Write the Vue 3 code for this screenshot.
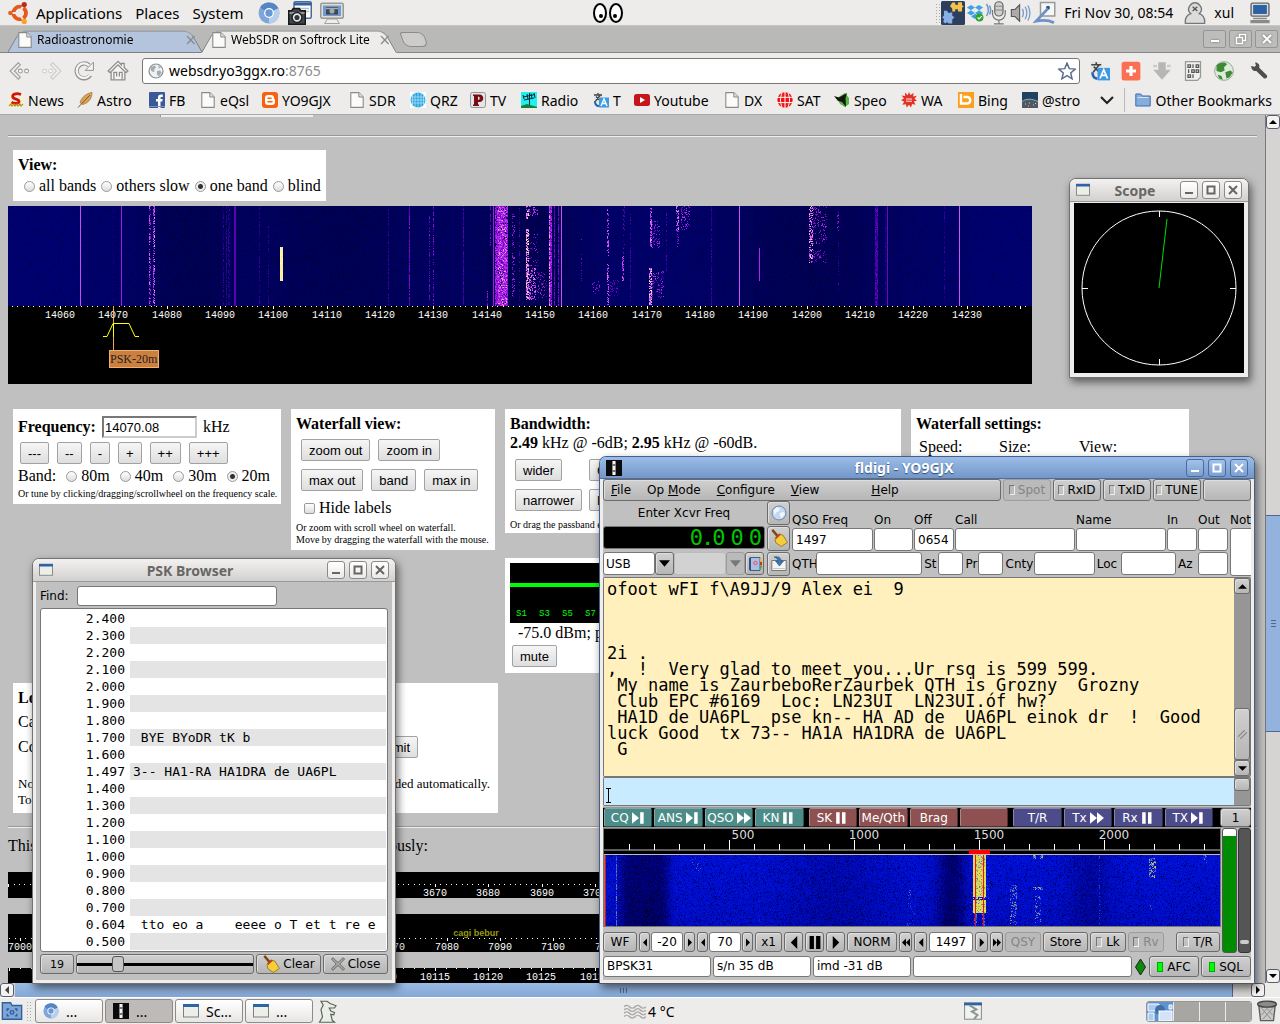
<script setup>
import { onMounted, ref } from 'vue'

/* ---------- icon artwork (16 x 16 grid) ---------- */
const art = {
  ubuntu: '<circle cx="8.500" cy="8" r="4.600" fill="none" stroke="#e8571c" stroke-width="2.800"/><path d="M8 8L1 8M8 8L12 1.500M8 8L12 14.500" stroke="#edeceb" stroke-width="1.500"/><circle cx="1.800" cy="8" r="1.700" fill="#e0641f"/><circle cx="11.800" cy="1.900" r="1.900" fill="#c02a1c"/><circle cx="11.800" cy="14.100" r="1.900" fill="#f2a71e"/>',
  chromium: '<circle cx="8" cy="8" r="7.600" fill="#7ea6d8"/><path d="M8 8L1.500 4A7.600 7.600 0 0 1 14.800 4.600Z" fill="#5585c2"/><path d="M8 8L14.800 4.600A7.600 7.600 0 0 1 8 15.600Z" fill="#b7cfec"/><circle cx="8" cy="8" r="3.600" fill="#fff"/><circle cx="8" cy="8" r="2.700" fill="#6a98d4"/>',
  camera: '<rect x="4" y=".5" width="11.500" height="11" rx="1" fill="#fff" stroke="#4a6a9c"/><path d="M4 2h11.500" stroke="#35609e" stroke-width="2"/><path d="M6 5h8M6 7h8" stroke="#b8c0cc"/><path d="M.5 6.500h2l1-1.500h4l1 1.500h3v9h-11z" fill="#44474a" stroke="#16181a"/><path d="M1 8h10" stroke="#a9acae"/><circle cx="6" cy="11" r="3.300" fill="#e4e6e8" stroke="#222"/><circle cx="6" cy="11" r="1.700" fill="#33373c"/>',
  display: '<rect x=".5" y="1.500" width="15" height="10" rx="1" fill="#dcdcd8" stroke="#9a9a96"/><rect x="2" y="3" width="12" height="7" fill="#6f9bd0"/><rect x="4" y="4" width="8" height="5" fill="#44474a"/><path d="M4 5h8" stroke="#a9acae"/><circle cx="8" cy="6.700" r="1.700" fill="#9ab"/><path d="M5 12h6l2 3H3z" fill="#eee" stroke="#999" stroke-width=".6"/>',
  doc: '<path d="M1.800.6h8l4.400 4.400v10.400H1.800z" fill="#fbfbfa" stroke="#8a8a88" stroke-width="1.100"/><path d="M9.800.6v4.400h4.400" fill="#ddd" stroke="#8a8a88"/>',
  back: '<path d="M7.500 2L1.500 8l6 6 1.500-1.500L4.700 8 9 3.500z" fill="#eceae8" stroke="#a09e9c" stroke-width=".8"/><circle cx="9" cy="8" r="1.400" fill="#fff" stroke="#999" stroke-width=".8"/><circle cx="13.500" cy="8" r="1.400" fill="#fff" stroke="#999" stroke-width=".8"/>',
  fwd: '<path d="M8.500 2l6 6-6 6L7 12.500 11.300 8 7 3.500z" fill="#f1efee" stroke="#cdcbc9" stroke-width=".8"/><circle cx="2.500" cy="8" r="1.300" fill="#fff" stroke="#ccc" stroke-width=".8"/><circle cx="7" cy="8" r="1.300" fill="#fff" stroke="#ccc" stroke-width=".8"/>',
  reload: '<path d="M13 11.500A6 6 0 1 1 12 3.400" fill="none" stroke="#929090" stroke-width="3.400"/><path d="M9 7.500h6.500V1z" fill="#f6f5f4" stroke="#929090" stroke-width=".8"/><path d="M12.800 11A5.800 5.800 0 1 1 12 3.600" fill="none" stroke="#f6f5f4" stroke-width="1.800"/>',
  home: '<path d="M8 1L.8 8l1.200 1 1-.8V14.500h10V8.200l1 .8 1.200-1-2.700-2.600V2.500h-2v1.100z" fill="#f5f4f3" stroke="#8d8b89" stroke-width=".9"/><path d="M3.500 8L8 3.500 12.500 8M5 14V9h2v3M9 12V9h2v5" fill="none" stroke="#8d8b89" stroke-width=".9"/>',
  globe: '<circle cx="8" cy="8" r="7" fill="#eef1f2" stroke="#8b9092" stroke-width="1.200"/><path d="M3 4l4-1.500 1 2-2 2 .5 2L5 9 2.500 7zM9 8l3-.5 1.500 2-2.500 4-2-2zM10 2.500l3 2-2 1z" fill="#a5abae"/>',
  news: '<rect width="16" height="16" fill="#f5efd8"/><path d="M13 2.500C8 .5 3.500 2.500 5 5.500c1 2 6 1.500 6 4 0 2.500-5 2-7.500.8" fill="none" stroke="#d0140e" stroke-width="2.800"/><path d="M1 14l2-2 1 2 2-2 1 2 2-2 1 2 2-2 1 2 2-2" stroke="#b5921a" fill="none" stroke-width="1.200"/>',
  feather: '<path d="M15 .5C11 1 5 4 3 10.500l2.500 2C12 11 15 6 15 .5z" fill="#d9a45c" stroke="#9a6a2c" stroke-width=".7"/><path d="M13 3L1 15.500" stroke="#7c5424"/>',
  fb: '<rect width="16" height="16" rx="1" fill="#3b5998"/><path d="M9 16V9.500H7V7h2V5.500C9 3.500 10 2.500 12 2.500h1.800V5h-1.300c-.7 0-1 .3-1 1v1h2.200l-.4 2.500h-1.800V16z" fill="#fff"/><path d="M0 14.500h16" stroke="#7c90bd"/>',
  blogger: '<rect width="16" height="16" rx="3" fill="#f7620e"/><path d="M6 3h3a3 3 0 0 1 3 3c0 1 1 .8 1 1.800V10a3 3 0 0 1-3 3H6a3 3 0 0 1-3-3V6a3 3 0 0 1 3-3z" fill="#fff"/><path d="M6 6.300h3M6 9.800h4" stroke="#f7620e" stroke-width="1.500" stroke-linecap="round"/>',
  qrz: '<rect width="16" height="16" fill="#fff"/><circle cx="8" cy="8" r="7.500" fill="#25a5de"/><path d="M0 5h16M0 8h16M0 11h16M5 0v16M8 0v16M11 0v16M2.500 2v12M13.500 2v12" stroke="#bfe6f7" stroke-width=".7"/>',
  tv: '<rect x=".5" y=".5" width="15" height="15" rx="2" fill="#e3e6e5" stroke="#8b9a98"/><path d="M3 2.500h6.500c5 0 5 7.500 0 7.500H8v2.500h1V14H3v-1.500h1V4H3zM8 4.500v3.500c2.300 0 2.300-3.500 0-3.500z" fill="#7a0c12" fill-rule="evenodd"/>',
  radio: '<rect width="16" height="16" fill="#1af2f2"/><path d="M8.500 1v15M2 5l12-2.500M3 8l10-2M2 3l1 4M6 2l1 5M10 1.500l1 5M13 1l1 5" stroke="#123" stroke-width="1"/><path d="M0 14l6-2 10 3v1H0z" fill="#197d3a"/>',
  translate: '<rect x=".5" y=".5" width="9" height="10" fill="#e4e6e2"/><path d="M1 3h8M5 1v2M2.500 9L7.500 3M3 4.500l5 5" stroke="#444" stroke-width="1.300"/><path d="M1 9c0 4 2 6 5 6v-2c-2 0-3-1.500-3-4z" fill="#2a62ae"/><rect x="6" y="5.500" width="10" height="10" fill="#3b9ae2"/><path d="M8 14l3-7 3 7M9 11.500h4" fill="none" stroke="#fff" stroke-width="1.400"/>',
  youtube: '<rect y="2" width="16" height="12" rx="2.500" fill="#c4161c"/><path d="M6 5v6l5-3z" fill="#fff"/>',
  sat: '<circle cx="8" cy="8" r="7.700" fill="#f01414"/><path d="M0 5.300h16M0 10.600h16M8 0v16M5 1c-2 5-2 9 0 14M11 1c2 5 2 9 0 14" stroke="#fff" stroke-width="1" fill="none"/>',
  speo: '<path d="M3 6l8-5 4 5v6l-4 3-5-3z" fill="#57b445"/><path d="M0 4l5 1.500L13 1l-1.500 5L12 15 8 10 4 9z" fill="#14180f"/>',
  wa: '<path d="M8 0l1.500 3.200L12.500.8l-.3 3.700 3.600-.7-2.300 3 2.500 1.700-3.100 1 1.600 3.200-3.400-.7L10 15.500 8 12.800 5.700 15.500l-.8-3.300-3.600.6 1.900-3L0 8l3-1.400L.6 3.500l3.600.5L4 .6l2.700 2.600z" fill="#e33223"/><path d="M5 7h6M5 9.200h6" stroke="#fff" stroke-width=".9"/>',
  bing: '<rect width="16" height="16" fill="#fba01c"/><path d="M3 2v9.500h6.500a3.300 3.300 0 0 0 0-6.500H5.500" fill="none" stroke="#fff" stroke-width="2.400"/>',
  astro: '<rect width="16" height="16" fill="#24405f"/><path d="M0 10c4-3 10-3 16 0v6H0z" fill="#4d5a64"/><path d="M0 9.500c4-3 10-3 16 0" stroke="#8fb6d4" fill="none"/><path d="M3 12h1M7 11h1M11 13h1M13 11.500h1M6 14h1" stroke="#e0c893"/>',
  folder: '<path d="M.8 14V2h5l1.500 2h7.900v10z" fill="#86aedd" stroke="#3d6bab"/><path d="M2.500 5.500h11" stroke="#d3e3f6"/>',
  star: '<path d="M8 1l2 4.900 5.300.4-4 3.400 1.200 5.200L8 12.100l-4.500 2.800 1.200-5.200-4-3.400L6 5.900z" fill="#fff" stroke="#5a6c8c" stroke-width="1.300"/>',
  plus: '<rect x=".5" y=".5" width="15" height="15" rx="2" fill="#fb6f52"/><path d="M8 4v8M4 8h8" stroke="#fff" stroke-width="2.500"/>',
  down: '<path d="M5 1h6v6h4l-7 8-7-8h4z" fill="#b7b6b4"/><path d="M1 4h3M12 4h3" stroke="#cbcac8" stroke-width="2"/>',
  binary: '<path d="M2 .5h12V13l-2.500 2.500H2z" fill="#f0f0ee" stroke="#999"/><path d="M4 3h2v2H4zM8 2.500v3M10.500 3h2v2h-2zM4.500 6.500v3M7 7h2v2H7zM10.500 7h2v2h-2zM4 11h2v2H4zM8 10.500v3" fill="none" stroke="#555"/>',
  earth: '<circle cx="8" cy="8" r="7.500" fill="#dfeadd" stroke="#7e9a7a" stroke-width=".6"/><path d="M2 3.500C5 .5 9 .8 10.500 2.500L8 5l.5 2.500-3 1.500L2 8zM9 9l4-1.500 2 1.500-2.500 4-2.500 1zM3 11l3 1 1 3-3-1.200z" fill="#3f8b34"/>',
  wrench: '<path d="M1 3.500l3 .8 1.300-1.300L4.500.5C7 .3 9 2.500 8.200 5.200l6.800 6.500c1 1.500-1 3.800-2.700 2.800L5.600 8C3 8.600 1 6.200 1 3.500z" fill="#4e4e4d"/>',
  puzzle: '<rect width="16" height="16" rx="1" fill="#2c3f5d"/><path d="M7.500 1h2v1.500h1.800V.8H14v2l1.200.7-1.200 1V7h-2.700V5.500H9.500V7h-2V5L6 3.500z" fill="#f3c24a"/><path d="M2 6.500h2l1 1.500L7.500 7.500v2.300l1.500 1-1.500 1.500V15H5l-1-1-1 1-1.500-1 .5-2L.8 11 2 9.500z" fill="#88b0e8"/>',
  dropbox: '<path d="M8 3L4.500.8.8 3.200 4.300 5.500zM8 3l3.500-2.200 3.700 2.400-3.500 2.300zM8 8l3.700-2.500 3.500 2.400-3.700 2.300zM8 8L4.300 5.500.8 7.900l3.700 2.300zM4.500 11L8 8.700l3.500 2.300L8 13.300z" fill="#3fa3e0"/><circle cx="12" cy="12" r="3.500" fill="#2fa52e"/><path d="M10.300 12l1.300 1.300L14 10.800" fill="none" stroke="#fff"/>',
  mic: '<path d="M1 2q2.500 4 0 8M3 3q1.500 3 0 6" fill="none" stroke="#7397c8"/><rect x="6.500" y=".5" width="5.500" height="9.500" rx="2.700" fill="#cfcfcd" stroke="#666" stroke-width=".8"/><path d="M6.500 3.500H12M6.500 6H12" stroke="#888" stroke-width=".8"/><path d="M5 6v2.500a4.200 4.200 0 0 0 8.500 0V6M9.300 12.500v2.500M6 15.300h6.500" fill="none" stroke="#777" stroke-width=".8"/>',
  speaker: '<path d="M1 5.500h2.500L7 2v12L3.500 10.500H1z" fill="#aaa" stroke="#555" stroke-width=".8"/><path d="M9 5q1.500 3 0 6M11 3.500q2.500 4.500 0 9M13 2.500q3 5.500 0 11" fill="none" stroke="#7397c8" stroke-width=".9"/>',
  ink: '<rect x="5" y="1" width="9.500" height="9" fill="#f6f6f6" stroke="#999"/><circle cx="10" cy="4.500" r="1.300" fill="#2e5285"/><path d="M10 5L2 13.500q7-1.500 12 1" fill="none" stroke="#6e92c8" stroke-width="1.800"/>',
  user: '<path d="M1 15.500c-.5-5 2.500-6.500 4-7-4-3 0-8 3-8s7 5 3 8c1.500.5 4.500 2 4 7z" fill="#dcdcda" stroke="#777"/><path d="M6.300 3.500l3.400 3M9.700 3.500l-3.400 3" stroke="#555"/>',
  pc: '<rect x="1.500" y=".8" width="13" height="9.500" rx="1" fill="#d8dad8" stroke="#666"/><rect x="3" y="2.200" width="10" height="6.500" fill="#2c62a3"/><path d="M3 11.500h10v1H3zM1 13h14v2.500H1z" fill="#8a8c8a"/>',
  rig: '<rect width="16" height="16" fill="#0b0b0b"/><path d="M8 1v14" stroke="#777" stroke-width="4"/><path d="M8 1v3M8 6v4M8 12v3" stroke="#f4f4f4" stroke-width="2.400"/>',
  win: '<rect x=".5" y="1.500" width="15" height="12.500" fill="#eceee8" stroke="#7c7f80"/><path d="M0 2.500h16" stroke="#2e63a5" stroke-width="3"/>',
  broom: '<path d="M2 .8l5 5.700" stroke="#7d4a12" stroke-width="2.200"/><path d="M4.500 8.500l4-4 3 1 4 6.500-5.500 3.500-5-3.500z" fill="#f2cf3b" stroke="#9a741c" stroke-width=".8"/><path d="M5 8.200l4-3.700" stroke="#c43a1c" stroke-width="1.600"/>',
  cross: '<path d="M2 .8l6 5.500 6-5.500 1.500 1.500L10 8l5.500 5.500L14 15.200 8 9.700l-6 5.500L.5 13.500 6 8 .5 2.300z" fill="#aaa9a7" stroke="#5e5e5c"/>',
  world: '<circle cx="8" cy="8" r="7" fill="#c3d9f0" stroke="#6886ad"/><path d="M2.500 5l3.500-3 3 1.500L8 6 5 7.500l-1 3zM9 8l4-1 1 2-3 4-2-1.500z" fill="#f2f6fa"/>',
  book: '<path d="M3 1.500h10v13H3z" fill="#a9bfe0" stroke="#3d5f96"/><path d="M3 2v12" stroke="#2f4f86" stroke-width="2"/><rect x="5.500" y="4" width="6" height="6" fill="#c9b2d4"/><circle cx="8.500" cy="7" r="1.700" fill="none" stroke="#a86a98"/><path d="M14 2.500v3" stroke="#f0c020" stroke-width="2"/><path d="M14 6v3" stroke="#d03020" stroke-width="2"/><path d="M14 9.500v3" stroke="#50b030" stroke-width="2"/>',
  save: '<path d="M.8 4.500h14.400v10H.8z" fill="#f4f4f3" stroke="#777"/><path d="M2.500 12.500h11" stroke="#999" stroke-dasharray="1 1"/><path d="M3 1c5-1 7 1 7 4h2.500L8.500 10l-4-5H7c0-2-1.500-3-4-4z" fill="#3f76b5" stroke="#24507f" stroke-width=".6"/>',
  desk: '<path d="M1 14V2h6l1 2h7v10z" fill="#7fa6d6" stroke="#2f5f9c"/><path d="M4.500 8V6.500H6M10 6.500h1.500V8M11.500 10v1.500H10M6 11.500H4.500V10" fill="none" stroke="#2f5f9c"/><circle cx="8" cy="9" r="1.300" fill="none" stroke="#2f5f9c"/>',
  gnome: '<path d="M4 1.500h4l2 1.500 4 1.500-1 1.500H9.500l1 2 2.500 1-.5 1.500-2-.3 1 4 1.500 1.300H3L5 12 4 7 5.500 4z" fill="#ecefe6" stroke="#596653" stroke-width=".8"/>',
  crack: '<rect x=".5" y=".8" width="15" height="14.500" fill="#f1f3ee" stroke="#8c9692"/><path d="M0 1.800h16" stroke="#2f62a6" stroke-width="2.400"/><path d="M5 3l6 3.500-4 2 5 3-3 3.500" fill="none" stroke="#8c9692" stroke-width="1.800"/>',
  trash: '<path d="M2 3.500l1.300 11.500h9.400L14 3.500z" fill="#c8c9c7" stroke="#5d5f5d"/><ellipse cx="8" cy="3" rx="6.800" ry="2.200" fill="#8a8c8a" stroke="#444"/><path d="M4 6l7 8M8 6l4 5M12 6l-7 8M8 6l-4 5" stroke="#8b8d8b" stroke-width=".7"/>',
  fog: '<path d="M0 3q2-3 4 0t4 0 4 0 4 0M0 6.500q2-3 4 0t4 0 4 0 4 0M0 10q2-3 4 0t4 0 4 0 4 0M0 13.500q2-3 4 0t4 0 4 0 4 0" fill="none" stroke="#a9a9a7" stroke-width="1.300"/>',
  chevron: '<path d="M2 5l6 6 6-6" fill="none" stroke="#222" stroke-width="2.200"/>'
}

const bookmarks = [
  ['News', 'news', 69], ['Astro', 'feather', 72], ['FB', 'fb', 51], ['eQsl', 'doc', 62],
  ['YO9GJX', 'blogger', 87], ['SDR', 'doc', 61], ['QRZ', 'qrz', 60], ['TV', 'tv', 51],
  ['Radio', 'radio', 72], ['T', 'translate', 41], ['Youtube', 'youtube', 90], ['DX', 'doc', 53],
  ['SAT', 'sat', 57], ['Speo', 'speo', 67], ['WA', 'wa', 57], ['Bing', 'bing', 64], ['@stro', 'astro', 77]
]

const extensions = ['translate', 'plus', 'down', 'binary', 'earth']

const views = ['all bands', 'others slow', 'one band', 'blind']
const view = ref('one band')
const bands = ['80m', '40m', '30m', '20m']
const band = ref('20m')
const frequency = ref('14070.08')

/* ---------- frequency scales ---------- */
function makeScale(first, last, zeroAt, origin, pxPerKhz, step) {
  const out = []
  for (let k = first; k <= last; k++) {
    const x = Math.round(zeroAt + (k - origin) * pxPerKhz)
    const major = k % step === 0
    out.push({ k, x, major, label: major && x > 11 && x < 1005 })
  }
  return out
}
const mainScale = makeScale(14051, 14241, 52, 14060, 5.333, 10)
const scale80 = makeScale(3590, 3781, 427, 3670, 5.333, 10)
const scale40 = makeScale(6998, 7189, 12, 7000, 5.333, 10)
const scale30 = makeScale(10075, 10171, 427, 10115, 10.64, 5)

/* ---------- PSK browser ---------- */
const channels = [
  ['2.400', ''], ['2.300', ''], ['2.200', ''], ['2.100', ''], ['2.000', ''], ['1.900', ''], ['1.800', ''],
  ['1.700', ' BYE BYoDR tK b'], ['1.600', ''], ['1.497', '3-- HA1-RA HA1DRA de UA6PL'], ['1.400', ''],
  ['1.300', ''], ['1.200', ''], ['1.100', ''], ['1.000', ''], ['0.900', ''], ['0.800', ''], ['0.700', ''],
  ['0.604', ' tto eo a    eeee o T et t re e'], ['0.500', '']
]
const level = ref(19)

/* ---------- fldigi ---------- */
const received = [
  'ofoot wFI f\\A9JJ/9 Alex ei  9', '', '', '', '2i .',
  ',  !  Very glad to meet you...Ur rsq is 599 599.',
  ' My name is ZaurbeboRerZaurbek QTH is Grozny  Grozny',
  ' Club EPC #6169  Loc: LN23UI  LN23UI.óf hw?',
  ' HA1D de UA6PL  pse kn-- HA AD de  UA6PL einok dr  !  Good',
  'luck Good  tx 73-- HA1A HA1DRA de UA6PL', ' G'
].join('\n')
const toggles = [['Spot', true], ['RxID', false], ['TxID', false], ['TUNE', false]]
const logTop = [
  ['QSO Freq', '1497', 82], ['On', '', 40], ['Off', '0654', 41], ['Call', '', 121],
  ['Name', '', 91], ['In', '', 31], ['Out', '', 31]
]
const logBottom = [['QTH', 24, 106], ['St', 14, 25], ['Pr', 13, 25], ['Cnty', 28, 61], ['Loc', 24, 55], ['Az', 20, 30]]
const glyph = { skip: 'M0 0l6 5-6 5zM7 0h3v10H7z', fast: 'M0 0l6 5-6 5zM6 0l6 5-6 5z', pause: 'M1 0h3v10H1zM6 0h3v10H6z' }
const macros = [
  { tone: 'teal', items: [['CQ', 'skip'], ['ANS', 'skip'], ['QSO', 'fast'], ['KN', 'pause']] },
  { tone: 'wine', items: [['SK', 'pause'], ['Me/Qth'], ['Brag'], ['']] },
  { tone: 'indigo', items: [['T/R'], ['Tx', 'fast'], ['Rx', 'pause'], ['TX', 'skip']] }
]
const wfTicks = Array.from({ length: 24 }, (_, i) => ({ x: 25 + i * 25, hz: (i + 1) * 100 }))

/* ---------- waterfalls ---------- */
function rng(seed) {
  let s = seed
  return () => {
    s = (s * 1664525 + 1013904223) >>> 0
    return s / 4294967296
  }
}
function ramp(stops, v) {
  const t = Math.max(0, Math.min(0.999, v)) * (stops.length - 1)
  const i = Math.floor(t)
  const f = t - i
  return [0, 1, 2].map(c => stops[i][c] + (stops[i + 1][c] - stops[i][c]) * f)
}
function paint(canvas, stops, base, signals, seed) {
  const { width: w, height: h } = canvas
  const rand = rng(seed)
  const lv = new Float32Array(w * h)
  for (let y = 0; y < h; y++) for (let x = 0; x < w; x++) lv[y * w + x] = base(x, y, rand)
  for (const [sx, sw, y0, y1, strength, density] of signals) {
    for (let y = y0; y < Math.min(y1, h); y++) {
      for (let x = sx; x < sx + sw; x++) {
        if (rand() < density) lv[y * w + x] = strength * (density < 1 ? 0.6 + rand() * 0.4 : 0.95 + rand() * 0.05)
      }
    }
  }
  const ctx = canvas.getContext('2d')
  const img = ctx.createImageData(w, h)
  lv.forEach((v, i) => {
    const c = ramp(stops, v)
    img.data.set([c[0], c[1], c[2], 255], i * 4)
  })
  ctx.putImageData(img, 0, 0)
}

const bandCanvas = ref(null)
const audioCanvas = ref(null)
onMounted(() => {
  paint(
    bandCanvas.value,
    [[0, 0, 40], [0, 0, 116], [110, 0, 190], [185, 40, 240], [225, 130, 240], [255, 255, 150]],
    (x, y, r) => {
      const dip = 0.06 * (Math.exp(-(((x - 180) / 50) ** 2)) + Math.exp(-(((x - 330) / 90) ** 2)) + Math.exp(-(((x - 520) / 60) ** 2)) + Math.exp(-(((x - 800) / 90) ** 2)))
      return (x < 70 || x > 960 ? 0.19 : 0.18) - dip - (r() < 0.22 ? r() * 0.1 : 0)
    },
    [
      [72, 1, 0, 100, 0.7, 1], [105, 1, 0, 100, 0.28, 0.4], [113, 1, 0, 100, 0.55, 1], [141, 1, 0, 100, 0.8, 0.6],
      [142, 1, 0, 100, 0.6, 0.4], [145, 1, 0, 100, 0.75, 0.6], [146, 1, 0, 100, 0.9, 0.5], [215, 1, 0, 100, 0.34, 0.7],
      [218, 1, 0, 100, 0.34, 0.8], [220, 2, 0, 100, 0.36, 0.5], [226, 2, 0, 100, 0.38, 1], [251, 1, 0, 100, 0.34, 0.6],
      [260, 1, 20, 100, 0.34, 0.6], [272, 3, 41, 75, 1, 1], [380, 1, 0, 100, 0.36, 0.6], [401, 1, 0, 100, 0.5, 0.9],
      [421, 1, 10, 95, 0.5, 0.6], [425, 1, 0, 100, 0.5, 0.6], [455, 1, 0, 100, 0.4, 0.9], [482, 1, 0, 40, 0.5, 0.6],
      [479, 1, 85, 100, 0.6, 0.8], [485, 1, 0, 100, 0.55, 1], [487, 13, 0, 100, 0.64, 0.92], [490, 9, 0, 100, 0.88, 0.35],
      [504, 3, 5, 95, 0.6, 0.25], [511, 1, 0, 100, 0.4, 0.4], [518, 3, 0, 13, 1, 0.7], [518, 3, 23, 94, 1, 0.7],
      [521, 9, 0, 10, 0.7, 0.3], [521, 9, 28, 60, 0.6, 0.15], [521, 7, 62, 94, 0.85, 0.4], [528, 11, 66, 92, 0.6, 0.25],
      [541, 1, 0, 100, 0.9, 0.9], [542, 2, 0, 100, 0.65, 0.9], [546, 1, 0, 100, 0.5, 0.9], [550, 1, 0, 100, 0.5, 0.9],
      [553, 1, 0, 100, 0.7, 1], [573, 1, 30, 75, 0.5, 0.25], [584, 8, 74, 88, 0.6, 0.2], [599, 2, 3, 50, 0.75, 0.4],
      [599, 2, 58, 99, 0.85, 0.6], [601, 10, 74, 90, 0.45, 0.2], [615, 2, 0, 55, 0.45, 0.2], [614, 2, 50, 75, 0.75, 0.6],
      [622, 1, 8, 95, 0.4, 0.6], [642, 2, 0, 43, 0.85, 0.6], [644, 8, 15, 42, 0.6, 0.2], [641, 3, 62, 99, 1, 0.7],
      [644, 12, 65, 92, 0.65, 0.25], [658, 1, 0, 65, 0.4, 0.4], [668, 3, 0, 25, 0.9, 0.5], [669, 2, 25, 42, 0.6, 0.3],
      [673, 9, 0, 24, 0.65, 0.25], [703, 1, 0, 100, 0.36, 0.8], [731, 1, 0, 100, 0.72, 1], [751, 1, 42, 75, 0.6, 1],
      [801, 4, 0, 57, 0.95, 0.55], [805, 14, 0, 38, 0.6, 0.2], [805, 14, 44, 57, 0.55, 0.2], [829, 2, 6, 25, 0.6, 0.4],
      [830, 1, 35, 90, 0.4, 0.3], [867, 3, 0, 100, 0.42, 0.95], [877, 1, 0, 100, 0.3, 0.7], [879, 1, 0, 100, 0.42, 1],
      [936, 1, 0, 100, 0.34, 0.6], [951, 1, 0, 100, 0.72, 1]
    ],
    7
  )
  paint(
    audioCanvas.value,
    [[0, 0, 20], [0, 0, 130], [0, 20, 235], [110, 130, 170], [215, 210, 90], [255, 240, 60]],
    (x, y, r) => {
      const dark = 0.17 * Math.exp(-(((x - 40) / 25) ** 6)) + 0.06 * Math.exp(-(((x - 230) / 50) ** 2)) + 0.17 * Math.exp(-(((x - 347) / 14) ** 2)) + 0.08 * Math.exp(-(((x - 485) / 22) ** 2))
      return 0.4 - dark - r() * 0.08 - (r() < 0.22 ? r() * 0.2 : 0) - (y / 71) * 0.03
    },
    [
      [12, 1, 0, 71, 0.62, 0.9], [155, 1, 0, 71, 0.44, 0.7], [86, 12, 0, 18, 0.58, 0.06], [304, 3, 30, 46, 0.6, 0.2],
      [303, 8, 45, 71, 0.5, 0.2], [366, 20, 0, 60, 0.5, 0.15], [369, 13, 0, 58, 0.86, 1], [371, 10, 0, 58, 0.95, 0.5],
      [369, 13, 42, 45, 0.5, 0.6], [370, 3, 58, 71, 0.62, 0.8], [378, 3, 58, 71, 0.62, 0.8], [406, 7, 30, 70, 0.66, 0.4],
      [429, 3, 0, 4, 0.8, 0.8], [436, 3, 0, 4, 0.8, 0.8], [429, 10, 32, 35, 0.75, 0.6], [431, 6, 40, 68, 0.66, 0.3],
      [495, 1, 0, 71, 0.54, 0.4], [545, 7, 3, 23, 0.78, 0.5], [546, 5, 48, 56, 0.6, 0.2], [599, 4, 0, 8, 0.68, 0.35]
    ],
    31
  )
})
</script>

<template>
  <div class="desktop">
    <header class="panel top">
      <nav class="menus">
        <svg class="i22" viewBox="0 0 16 16" v-html="art.ubuntu" />
        <button>Applications</button><button>Places</button><button>System</button>
        <svg class="i22" viewBox="0 0 16 16" v-html="art.chromium" />
        <svg class="i24" viewBox="0 0 16 16" v-html="art.camera" />
        <svg class="i24" viewBox="0 0 16 16" v-html="art.display" />
      </nav>
      <svg class="eyes" viewBox="0 0 32 22">
        <g fill="#fff" stroke="#000" stroke-width="2"><ellipse cx="8" cy="11" rx="6" ry="9" /><ellipse cx="24" cy="11" rx="6" ry="9" /></g>
        <circle cx="9" cy="14" r="2" /><circle cx="23" cy="14" r="2" />
      </svg>
      <div class="tray">
        <span class="grip"></span>
        <svg class="i24" viewBox="0 0 16 16" v-html="art.puzzle" />
        <svg class="i18" viewBox="0 0 16 16" v-html="art.dropbox" />
        <svg class="i24" viewBox="0 0 16 16" v-html="art.mic" />
        <svg class="i22" viewBox="0 0 16 16" v-html="art.speaker" />
        <svg class="i24" viewBox="0 0 16 16" v-html="art.ink" />
        <time>Fri Nov 30, 08:54</time>
        <svg class="i22" viewBox="0 0 16 16" v-html="art.user" />
        <span class="who">xul</span>
        <svg class="i22" viewBox="0 0 16 16" v-html="art.pc" />
      </div>
    </header>

    <section class="browser">
      <div class="tabs">
        <a href="#radio" class="tab"><svg class="i16" viewBox="0 0 16 16" v-html="art.doc" /><span>Radioastronomie</span><b>×</b></a>
        <a href="#websdr" class="tab active"><svg class="i16" viewBox="0 0 16 16" v-html="art.doc" /><span>WebSDR on Softrock Lite</span><b>×</b></a>
        <button class="newtab" aria-label="New tab"></button>
        <div class="wincontrols">
          <button aria-label="Minimize"><svg viewBox="0 0 12 12"><path d="M2 8h8" stroke="#fff" stroke-width="2" /></svg></button>
          <button aria-label="Restore"><svg viewBox="0 0 12 12"><path d="M1.500 4.500h6v6h-6zM4.500 4.500v-3h6v6h-3" fill="none" stroke="#fff" stroke-width="1.500" /></svg></button>
          <button aria-label="Close"><svg viewBox="0 0 12 12"><path d="M2 2l8 8M10 2l-8 8" stroke="#fff" stroke-width="2" /></svg></button>
        </div>
      </div>
      <div class="toolbar">
        <button aria-label="Back"><svg class="i22" viewBox="0 0 16 16" v-html="art.back" /></button>
        <button aria-label="Forward"><svg class="i22" viewBox="0 0 16 16" v-html="art.fwd" /></button>
        <button aria-label="Reload"><svg class="i20" viewBox="0 0 16 16" v-html="art.reload" /></button>
        <button aria-label="Home"><svg class="i22" viewBox="0 0 16 16" v-html="art.home" /></button>
        <div class="address">
          <svg class="i16" viewBox="0 0 16 16" v-html="art.globe" />
          <span>websdr.yo3ggx.ro<i>:8765</i></span>
          <svg class="i18" viewBox="0 0 16 16" v-html="art.star" />
        </div>
        <button v-for="e in extensions" :key="e" class="ext" :aria-label="e"><svg class="i20" viewBox="0 0 16 16" v-html="art[e]" /></button>
        <button class="ext" aria-label="Settings"><svg class="i18" viewBox="0 0 16 16" v-html="art.wrench" /></button>
      </div>
      <nav class="bookmarks">
        <a v-for="[label, icon, w] in bookmarks" :key="label" href="#" :style="{ width: w + 'px' }">
          <svg class="i16" viewBox="0 0 16 16" v-html="art[icon]" />{{ label }}
        </a>
        <svg class="i16" viewBox="0 0 16 16" v-html="art.chevron" />
        <a href="#" class="other"><svg class="i16" viewBox="0 0 16 16" v-html="art.folder" />Other Bookmarks</a>
      </nav>

      <div class="viewport">
        <main class="page">
          <div class="cutoff"></div>
          <hr>
          <fieldset class="card viewbox">
            <b>View:</b>
            <div>
              <label v-for="v in views" :key="v"><input v-model="view" type="radio" name="view" :value="v">{{ v }}</label>
            </div>
          </fieldset>

          <div class="spectrum">
            <canvas ref="bandCanvas" width="1024" height="100"></canvas>
            <svg class="scale" width="1024" height="78" viewBox="0 0 1024 78">
              <template v-for="t in mainScale" :key="t.k">
                <rect :x="t.x" y="0" width="1" :height="t.major ? 3 : 1" fill="#fff" />
                <text v-if="t.label" :x="t.x" y="12">{{ t.k }}</text>
              </template>
              <path d="M105.500 0v46" stroke="#f0a860" />
              <path d="M95 30.500h4l6-13h16l6 13h4" fill="none" stroke="#ff0" />
              <path d="M105.500 18v13" stroke="#ff0" />
            </svg>
            <a href="#psk" class="station">PSK-20m</a>
          </div>

          <div class="cards">
            <section class="card freq">
              <div class="line"><label for="freq"><b>Frequency:</b></label><input id="freq" v-model="frequency" type="text"><span>kHz</span></div>
              <div class="steps"><button v-for="s in ['---', '--', '-', '+', '++', '+++']" :key="s">{{ s }}</button></div>
              <div class="bands">Band: <label v-for="b in bands" :key="b"><input v-model="band" type="radio" name="band" :value="b">{{ b }}</label></div>
              <small>Or tune by clicking/dragging/scrollwheel on the frequency scale.</small>
            </section>
            <section class="card wview">
              <b>Waterfall view:</b>
              <div class="steps"><button>zoom out</button><button>zoom in</button></div>
              <div class="steps"><button>max out</button><button>band</button><button>max in</button></div>
              <label class="hide"><input type="checkbox">Hide labels</label>
              <small>Or zoom with scroll wheel on waterfall.<br>Move by dragging the waterfall with the mouse.</small>
            </section>
            <div class="column">
              <section class="card bw">
                <b>Bandwidth:</b>
                <div><b>2.49</b> kHz @ -6dB; <b>2.95</b> kHz @ -60dB.</div>
                <div class="steps"><button>wider</button><button>CW</button></div>
                <div class="steps"><button>narrower</button><button>LSB</button></div>
                <small>Or drag the passband edges.</small>
              </section>
              <section class="card meter">
                <svg width="386" height="60" viewBox="0 0 386 60">
                  <rect width="386" height="60" />
                  <rect y="20" width="300" height="4" fill="#0f0" />
                  <text x="6" y="53">S1</text><text x="29" y="53">S3</text><text x="52" y="53">S5</text><text x="75" y="53">S7</text>
                </svg>
                <div class="dbm">-75.0 dBm; peak</div>
                <button>mute</button>
              </section>
            </div>
            <section class="card wset">
              <b>Waterfall settings:</b>
              <div class="three"><span>Speed:</span><span>Size:</span><span>View:</span></div>
            </section>
          </div>

          <section class="card log">
            <b>Logbook:</b>
            <div>Call:</div>
            <div class="split"><span>Comments:</span><button>submit</button></div>
            <div class="split note"><span>Note:</span><span>added automatically.</span></div>
            <div class="note">To view</div>
          </section>
          <hr>
          <p class="multi"><span>This</span><span>simultaneously:</span></p>

          <div class="strip">
            <svg width="1024" height="26" viewBox="0 0 1024 26">
              <template v-for="t in scale80" :key="t.k">
                <rect :x="t.x" y="12" width="1" :height="t.major ? 3 : 1" fill="#fff" />
                <text v-if="t.label" :x="t.x" y="24">{{ t.k }}</text>
              </template>
            </svg>
          </div>
          <div class="strip">
            <svg width="1024" height="38" viewBox="0 0 1024 38">
              <template v-for="t in scale40" :key="t.k">
                <rect :x="t.x" y="24" width="1" :height="t.major ? 3 : 1" fill="#fff" />
                <text v-if="t.label" :x="t.x" y="36">{{ t.k }}</text>
              </template>
              <text x="468" y="22" class="caption">cagi bebur</text>
            </svg>
          </div>
          <div class="strip">
            <svg width="1024" height="38" viewBox="0 0 1024 38">
              <template v-for="t in scale30" :key="t.k">
                <rect :x="t.x" y="0" width="1" :height="t.major ? 3 : 1" fill="#fff" />
                <text v-if="t.label" :x="t.x" y="12">{{ t.k }}</text>
              </template>
            </svg>
          </div>
        </main>
        <div class="vbar">
          <button aria-label="Scroll up"><svg viewBox="0 0 8 8"><path d="M0 6l4-4 4 4z" /></svg></button>
          <span class="before"></span><span class="thumb"><i></i></span><span class="after"></span>
          <button aria-label="Scroll down"><svg viewBox="0 0 8 8"><path d="M0 2l4 4 4-4z" /></svg></button>
        </div>
      </div>
      <div class="hbar">
        <button aria-label="Scroll left"><svg viewBox="0 0 8 8"><path d="M6 0L2 4l4 4z" fill="#444" /></svg></button>
        <span class="thumb"><i></i></span><span class="rest"></span>
        <button aria-label="Scroll right"><svg viewBox="0 0 8 8"><path d="M2 0l4 4-4 4z" /></svg></button>
        <span class="corner"></span>
      </div>
    </section>

    <footer class="panel bottom">
      <svg class="i22" viewBox="0 0 16 16" v-html="art.desk" />
      <span class="grip"></span>
      <button class="task"><svg class="i16" viewBox="0 0 16 16" v-html="art.chromium" /><span>...</span></button>
      <button class="task on"><svg class="i16" viewBox="0 0 16 16" v-html="art.rig" /><span>...</span></button>
      <button class="task"><svg class="i16" viewBox="0 0 16 16" v-html="art.win" /><span>Sc...</span></button>
      <button class="task"><svg class="i16" viewBox="0 0 16 16" v-html="art.win" /><span>...</span></button>
      <svg class="i24" viewBox="0 0 16 16" v-html="art.gnome" />
      <div class="weather"><svg class="i22" viewBox="0 0 16 16" preserveAspectRatio="none" v-html="art.fog" />4 °C</div>
      <svg class="i18 crack" viewBox="0 0 16 16" v-html="art.crack" />
      <div class="pager">
        <svg viewBox="0 0 26 20"><rect width="26" height="20" fill="#5f93cf" /><path d="M1 2h11v7H1zM1 11h6v8H1z" fill="#a9cbf0" stroke="#fff" /><circle cx="13" cy="8" r="5" fill="#3f6ea8" /><path d="M22 3h3v4h-3z" fill="#a9cbf0" stroke="#fff" /><rect x="12" y="9" width="13" height="10" fill="#d3e4f8" stroke="#fff" /></svg>
        <span></span><span></span><span></span>
      </div>
      <svg class="i22" viewBox="0 0 16 16" v-html="art.trash" />
    </footer>

    <!-- Scope -->
    <section class="window scope">
      <div class="title"><svg class="i14" viewBox="0 0 16 16" v-html="art.win" /><h2>Scope</h2>
        <button aria-label="Minimize"><svg viewBox="0 0 12 12"><path d="M2 9h8" /></svg></button>
        <button aria-label="Maximize"><svg viewBox="0 0 12 12"><path d="M2.500 2.500h7v7h-7z" /></svg></button>
        <button aria-label="Close"><svg viewBox="0 0 12 12"><path d="M2 2l8 8M10 2l-8 8" /></svg></button>
      </div>
      <svg class="dial" viewBox="0 0 170 170">
        <rect width="170" height="170" />
        <g fill="none" stroke="#fff"><circle cx="85" cy="85" r="77" /><path d="M85.500 8v6M85.500 156v6M8 85.500h6M156 85.500h6" /></g>
        <path d="M85 85L93 16" stroke="#0d0" />
      </svg>
    </section>

    <!-- PSK Browser -->
    <section class="window psk">
      <div class="title"><svg class="i14" viewBox="0 0 16 16" v-html="art.win" /><h2>PSK Browser</h2>
        <button aria-label="Minimize"><svg viewBox="0 0 12 12"><path d="M2 9h8" /></svg></button>
        <button aria-label="Maximize"><svg viewBox="0 0 12 12"><path d="M2.500 2.500h7v7h-7z" /></svg></button>
        <button aria-label="Close"><svg viewBox="0 0 12 12"><path d="M2 2l8 8M10 2l-8 8" /></svg></button>
      </div>
      <div class="body">
        <div class="find"><label for="find">Find:</label><input id="find" type="text"></div>
        <div class="list">
          <table>
            <tbody>
              <tr v-for="[f, text] in channels" :key="f"><th>{{ f }}</th><td>{{ text }}</td></tr>
            </tbody>
          </table>
        </div>
        <div class="actions">
          <output class="bevel">{{ level }}</output>
          <div class="slider bevel"><input v-model="level" type="range" min="0" max="90" aria-label="Squelch level"></div>
          <button class="bevel"><svg class="i18" viewBox="0 0 16 16" v-html="art.broom" />Clear</button>
          <button class="bevel"><svg class="i14" viewBox="0 0 16 16" v-html="art.cross" />Close</button>
        </div>
      </div>
    </section>

    <!-- fldigi -->
    <section class="window fldigi">
      <div class="title"><svg class="i16" viewBox="0 0 16 16" v-html="art.rig" /><h2>fldigi - YO9GJX</h2>
        <button aria-label="Minimize"><svg viewBox="0 0 12 12"><path d="M2 9h8" /></svg></button>
        <button aria-label="Maximize"><svg viewBox="0 0 12 12"><path d="M2.500 2.500h7v7h-7z" /></svg></button>
        <button aria-label="Close"><svg viewBox="0 0 12 12"><path d="M2 2l8 8M10 2l-8 8" /></svg></button>
      </div>
      <div class="body">
        <div class="menurow">
          <nav class="bevel">
            <button><u>F</u>ile</button><button>Op <u>M</u>ode</button><button><u>C</u>onfigure</button><button class="gap"><u>V</u>iew</button><button><u>H</u>elp</button>
          </nav>
          <button v-for="[t, off] in toggles" :key="t" class="bevel toggle" :disabled="off"><i></i>{{ t }}</button>
          <span class="bevel toggle"></span>
        </div>

        <div class="rigrow">
          <div class="rig">
            <div class="xcvr">Enter Xcvr Freq</div>
            <output class="digits"><span>0</span><span>.</span><span>0</span><span>0</span><span>0</span></output>
            <div class="modes">
              <select aria-label="Mode"><option>USB</option></select>
              <button class="bevel drop" aria-label="Show modes"><svg viewBox="0 0 10 6"><path d="M0 0h10L5 6z" /></svg></button>
              <select disabled aria-label="Filter"><option></option></select>
              <button class="bevel drop" disabled aria-label="Show filters"><svg viewBox="0 0 10 6"><path d="M0 0h10L5 6z" fill="#777" /></svg></button>
              <button class="bevel drop" aria-label="Address book"><svg class="i16" viewBox="0 0 16 16" v-html="art.book" /></button>
            </div>
          </div>
          <div class="side">
            <button class="bevel" aria-label="Lookup"><svg class="i16" viewBox="0 0 16 16" v-html="art.world" /></button>
            <button class="bevel" aria-label="Clear"><svg class="i18" viewBox="0 0 16 16" v-html="art.broom" /></button>
            <button class="bevel" aria-label="Save"><svg class="i16" viewBox="0 0 16 16" v-html="art.save" /></button>
          </div>
          <div class="log2">
            <div class="r1">
              <label v-for="[l, v, w] in logTop" :key="l" :style="{ width: w + 'px' }">{{ l }}<input type="text" :value="v"></label>
            </div>
            <div class="r2">
              <label v-for="[l, lw, w] in logBottom" :key="l"><span :style="{ width: lw + 'px' }">{{ l }}</span><input type="text" :style="{ width: w + 'px' }"></label>
            </div>
          </div>
          <label class="notes">Notes<textarea></textarea></label>
        </div>

        <div class="rx">
          <textarea readonly spellcheck="false" aria-label="Received text" :value="received"></textarea>
          <div class="sbar">
            <button class="bevel" aria-label="Up"><svg viewBox="0 0 8 8"><path d="M0 6l4-4 4 4z" /></svg></button>
            <span class="room"></span>
            <span class="bevel knob"><svg viewBox="0 0 8 8"><path d="M0 6l6-6M2 8l6-6" stroke="#888" fill="none" /></svg></span>
            <button class="bevel" aria-label="Down"><svg viewBox="0 0 8 8"><path d="M0 2l4 4 4-4z" /></svg></button>
          </div>
        </div>
        <div class="tx">
          <textarea aria-label="Transmit text"></textarea>
          <div class="sbar"><span class="bevel stub"></span></div>
          <svg class="ibeam" viewBox="0 0 5 15"><path d="M0 .5h5M0 14.500h5M2.500 0v15" stroke="#000" fill="none" /></svg>
        </div>

        <div class="macros">
          <div v-for="g in macros" :key="g.tone" class="group" :class="g.tone">
            <button v-for="[t, s] in g.items" :key="t">{{ t }}<svg v-if="s" viewBox="0 0 12 10"><path :d="glyph[s]" /></svg></button>
          </div>
          <button class="bevel page1">1</button>
        </div>

        <div class="wfrow">
          <div class="wfcol">
            <div class="audio">
              <svg viewBox="0 0 617 26" width="617" height="26">
                <rect width="617" height="26" />
                <path d="M0 21h617M0 25.500h617" stroke="#bbb" />
                <template v-for="t in wfTicks" :key="t.hz">
                  <rect :x="t.x" :y="t.hz % 500 ? 15 : 11" width="1" :height="t.hz % 500 ? 6 : 10" fill="#fff" />
                  <text v-if="t.hz % 500 === 0" :x="t.hz < 1000 ? t.x + 14 : t.x + 10" y="10">{{ t.hz }}</text>
                </template>
                <rect x="365" y="21" width="21" height="4" fill="red" />
              </svg>
              <div class="fall">
                <canvas ref="audioCanvas" width="617" height="71"></canvas>
                <svg viewBox="0 0 617 71" preserveAspectRatio="none"><path d="M.5 0v71" stroke="#fa5020" stroke-width="2" /><path d="M371.500 0v71M379.500 0v71" stroke="#f01010" /></svg>
              </div>
            </div>
            <div class="ctl">
              <button class="bevel wf">WF</button>
              <button class="bevel n" aria-label="Lower upper level"><svg viewBox="0 0 6 8"><path d="M5 0L1 4l4 4z" /></svg></button><input class="v" value="-20" aria-label="Upper level"><button class="bevel n" aria-label="Raise upper level"><svg viewBox="0 0 6 8"><path d="M1 0l4 4-4 4z" /></svg></button>
              <button class="bevel n" aria-label="Lower range"><svg viewBox="0 0 6 8"><path d="M5 0L1 4l4 4z" /></svg></button><input class="v" value="70" aria-label="Range"><button class="bevel n" aria-label="Raise range"><svg viewBox="0 0 6 8"><path d="M1 0l4 4-4 4z" /></svg></button>
              <button class="bevel x1">x1</button>
              <button class="bevel m" aria-label="Left"><svg viewBox="0 0 10 12"><path d="M8 0L2 6l6 6z" /></svg></button>
              <button class="bevel m" aria-label="Pause"><svg viewBox="0 0 10 12"><path d="M0 0h4v12H0zM6 0h4v12H6z" /></svg></button>
              <button class="bevel m" aria-label="Right"><svg viewBox="0 0 10 12"><path d="M2 0l6 6-6 6z" /></svg></button>
              <button class="bevel norm">NORM</button>
              <button class="bevel s" aria-label="Far down"><svg viewBox="0 0 10 8"><path d="M5 0L1 4l4 4zM9 0L5 4l4 4z" /></svg></button>
              <button class="bevel s" aria-label="Down"><svg viewBox="0 0 6 8"><path d="M5 0L1 4l4 4z" /></svg></button>
              <input class="f" value="1497" aria-label="Audio frequency">
              <button class="bevel s" aria-label="Up"><svg viewBox="0 0 6 8"><path d="M1 0l4 4-4 4z" /></svg></button>
              <button class="bevel s" aria-label="Far up"><svg viewBox="0 0 10 8"><path d="M1 0l4 4-4 4zM5 0l4 4-4 4z" /></svg></button>
              <button class="bevel q" disabled>QSY</button>
              <button class="bevel st">Store</button>
              <button class="bevel q led"><i></i>Lk</button>
              <button class="bevel q led" disabled><i></i>Rv</button>
              <button class="bevel tr led"><i></i>T/R</button>
            </div>
          </div>
          <div class="level"></div>
          <div class="squelch"><span></span></div>
        </div>

        <div class="status">
          <output class="a">BPSK31</output><output class="b">s/n 35 dB</output><output class="b">imd -31 dB</output><output class="c"></output>
          <svg viewBox="0 0 12 18"><path d="M6 1l5 8-5 8-5-8z" fill="#0a8a0a" stroke="#222" /></svg>
          <button class="bevel led lit"><i></i>AFC</button><button class="bevel led lit"><i></i>SQL</button>
        </div>
      </div>
    </section>
  </div>
</template>

<style>
body { margin: 0; overflow: hidden; }
</style>

<style scoped>
* { box-sizing: border-box; }
.desktop { position: relative; display: flex; flex-direction: column; height: 100vh; background: #c0c0c0; overflow: hidden; font: 14px "Noto Sans", "Open Sans", sans-serif; color: #000; }
button { font: inherit; color: inherit; background: none; border: 0; padding: 0; margin: 0; }
input, select, textarea { font: inherit; margin: 0; padding: 0; }
a { color: inherit; text-decoration: none; }
svg { flex: none; display: block; }
.i14 { width: 14px; height: 14px; } .i16 { width: 16px; height: 16px; } .i18 { width: 18px; height: 18px; }
.i20 { width: 20px; height: 20px; } .i22 { width: 22px; height: 22px; } .i24 { width: 24px; height: 24px; }

.panel { display: flex; align-items: center; background: #edeceb; flex: none; }
.top { height: 26px; justify-content: space-between; padding: 0 8px; border-bottom: 1px solid #c9c7c5; }
.menus { display: flex; align-items: center; width: 584px; font-size: 15px; }
.menus button { margin-left: 6px; margin-right: 7px; }
.menus svg { margin-left: 8px; }
.menus svg:first-child { margin-left: 0; }
.eyes { width: 32px; height: 22px; }
.tray { display: flex; align-items: center; justify-content: flex-end; width: 648px; }
.tray svg { margin-right: 1px; }
.tray time { margin: 0 11px 0 6px; }
.who { margin: 0 15px 0 7px; }
.grip { width: 6px; height: 20px; background: radial-gradient(circle, #aaa 1px, transparent 1px) 0 0 / 3px 3px; }

.browser { flex: 1; min-height: 0; display: flex; flex-direction: column; }
.tabs { display: flex; align-items: flex-end; height: 27px; background: #b9b9b8; border-bottom: 1px solid #858585; padding-left: 3px; flex: none; font-size: 12px; }
.tab { position: relative; z-index: 0; display: flex; align-items: center; gap: 4px; width: 204px; height: 25px; padding: 0 10px 0 14px; margin-right: -10px; }
.tab::before { content: ""; position: absolute; z-index: -1; inset: 0 4px -1px; background: #b4c4dc; border: 1px solid #7d7f83; border-radius: 8px 8px 0 0; transform: perspective(30px) rotateX(10deg); transform-origin: bottom; }
.tab.active { z-index: 1; }
.tab.active::before { background: #edeceb; border-bottom-color: #edeceb; }
.tab span { flex: 1; white-space: nowrap; overflow: hidden; }
.tab b { font: 15px "DejaVu Sans", sans-serif; color: #8a8a8a; }
.newtab { width: 24px; height: 15px; margin: 0 0 5px 11px; border: 1px solid #8b8b8b; background: #cdcccb; border-radius: 3px 6px 6px; transform: skewX(20deg); }
.wincontrols { display: flex; gap: 3px; margin-left: auto; align-self: center; padding-right: 2px; }
.wincontrols button { width: 23px; height: 18px; border: 1px solid #949494; border-radius: 2px; display: grid; place-items: center; background: #bdbdbc; }
.wincontrols svg { width: 12px; height: 12px; filter: drop-shadow(0 0 1px #666); }
.toolbar { display: flex; align-items: center; height: 35px; padding: 0 8px; background: #edeceb; flex: none; }
.toolbar button { margin-right: 11px; width: 22px; }
.address { flex: 1; display: flex; align-items: center; height: 26px; border: 1px solid #777; border-radius: 3px; background: #fff; padding: 0 3px 0 5px; gap: 5px; margin: 0 10px 0 2px; }
.address span { flex: 1; }
.address i { font-style: normal; color: #8c8c8c; }
.toolbar .ext { margin-right: 9px; }
.toolbar .ext:last-child { margin: 0 0 0 5px; }
.bookmarks { display: flex; align-items: center; height: 27px; padding: 0 8px 2px; background: #edeceb; border-bottom: 1px solid #a9a9a9; flex: none; }
.bookmarks a { display: flex; align-items: center; gap: 4px; white-space: nowrap; flex: none; }
.bookmarks .other { margin-left: auto; border-left: 1px solid #bbb; padding-left: 10px; gap: 5px; height: 24px; }

.viewport { flex: 1; min-height: 0; display: flex; overflow: hidden; }
.page { flex: 1; min-width: 0; overflow: hidden; padding: 0 8px; font: 16px/18px "Liberation Serif", serif; }
hr { margin: 0; border: 0; border-top: 1px solid #999; border-bottom: 1px solid #eee; height: 2px; }
.cutoff { height: 2px; width: 153px; margin: 0 0 18px 152px; background: #eee; border-left: 1px solid #999; }
.card { background: #fff; padding: 5px; margin: 0; border: 0; }
.viewbox { width: 312px; margin: 13px 0 5px 5px; height: 51px; white-space: nowrap; }
.viewbox div { display: flex; gap: 5px; margin-top: 2px; padding-left: 6px; }
.page label { display: inline-flex; align-items: center; gap: 4px; }
input[type=radio], input[type=checkbox] { appearance: none; width: 11px; height: 11px; border: 1px solid #999; border-radius: 50%; background: linear-gradient(#fff, #ddd); flex: none; }
input[type=checkbox] { border-radius: 2px; }
input[type=radio]:checked { background: radial-gradient(circle, #333 2px, #eee 3px); }
.spectrum { position: relative; width: 1024px; height: 178px; background: #000; }
canvas { display: block; }
.scale text, .strip text { font: 10px "Liberation Mono", monospace; fill: #fff; text-anchor: middle; }
.station { position: absolute; left: 101px; top: 144px; height: 18px; font-size: 12px; line-height: 16px; color: #222; background: #cc8040; border: 1px solid #f0b070; width: 50px; white-space: nowrap; }
.cards { display: flex; align-items: flex-start; gap: 10px; margin: 25px 0 10px 5px; }
.cards > * { flex: none; }
.column { display: flex; flex-direction: column; gap: 25px; width: 396px; }
.page button { font: 13px "Liberation Sans", sans-serif; height: 22px; padding: 0 7px; border: 1px solid #a2a2a2; border-radius: 2px; background: linear-gradient(#f6f6f6, #dedede); }
.card > b { display: block; line-height: 20px; }
.card small { display: block; font-size: 10px; line-height: 12px; white-space: nowrap; }
.steps { display: flex; gap: 8px; }
.freq { width: 268px; height: 95px; }
.freq .line { display: flex; align-items: center; gap: 6px; height: 26px; margin-bottom: 2px; }
.freq input[type=text] { width: 95px; height: 22px; font: 13px "Liberation Sans", sans-serif; border: 2px inset #ccc; padding-left: 1px; }
.freq .steps { padding-left: 2px; }
.bands { display: flex; gap: 10px; margin: 3px 0; }
.freq small { margin-top: 2px; }
.wview { width: 204px; height: 141px; }
.wview .steps { padding-left: 5px; margin: 5px 0 8px; }
.wview .hide { padding-left: 8px; margin-bottom: 5px; }
.bw { height: 124px; }
.bw .steps { display: grid; grid-template-columns: 66px auto; justify-items: start; margin: 7px 0 8px; padding-left: 5px; }
.meter { height: 115px; }
.meter svg text { font: 9px "Liberation Mono", monospace; fill: #0f0; }
.dbm { padding-left: 8px; margin: 1px 0 3px; }
.meter button { margin-left: 2px; }
.wset { width: 278px; height: 128px; }
.three { display: grid; grid-template-columns: 80px 80px 80px; padding: 4px 0 0 3px; }
.log { width: 485px; height: 130px; margin: 0 0 13px 5px; }
.log div { margin-top: 5px; }
.split { display: flex; justify-content: space-between; align-items: center; }
.log .split button { margin-right: 75px; }
.log .note { font-size: 13px; line-height: 16px; margin-top: 18px; padding-right: 3px; }
.log .note + .note { margin: 0; }
.multi { display: flex; justify-content: space-between; width: 420px; margin: 9px 0 17px; }
.strip { width: 1024px; background: #000; margin-bottom: 16px; }
.strip .caption { font: bold 9px "Liberation Sans", sans-serif; fill: #99990c; }

.vbar { width: 15px; display: flex; flex-direction: column; flex: none; border-left: 1px solid #777; background: #d6d4d2; }
.vbar button, .hbar button { display: grid; place-items: center; width: 14px; height: 14px; background: #f4f3f2; border: 1px solid #555e70; border-radius: 3px; flex: none; }
.vbar svg, .hbar svg { width: 8px; height: 8px; }
.vbar .before { flex: 387; } .vbar .after { flex: 238; }
.vbar .thumb { flex: 216; display: grid; place-items: center; background: #93b3de; border: solid #54668a; border-width: 1px 0; }
.vbar i { width: 5px; height: 7px; background: repeating-linear-gradient(#54668a 0 1px, transparent 1px 3px); }
.hbar { display: flex; height: 14px; flex: none; background: #d6d4d2; }
.hbar .thumb { flex: 1; display: grid; place-items: center; margin-left: 1px; background: linear-gradient(#9bbae4, #84a8d6); border-right: 1px solid #54668a; }
.hbar i { width: 7px; height: 5px; background: repeating-linear-gradient(90deg, #54668a 0 1px, transparent 1px 3px); }
.hbar .rest { width: 18px; } .hbar .corner { width: 15px; background: #edeceb; }

.bottom { height: 27px; padding: 0 2px 0 1px; border-top: 1px solid #fff; }
.bottom .grip { margin: 0 3px; }
.task { display: flex; align-items: center; width: 68px; height: 24px; margin-right: 2px; padding-left: 7px; border: 1px solid #8d8b89; border-radius: 3px; background: linear-gradient(#fff, #e8e6e4); gap: 7px; }
.task.on { background: #bdbab7; }
.weather { display: flex; align-items: center; gap: 2px; margin-left: 285px; }
.weather svg { height: 15px; }
.crack { margin-left: auto; }
.pager { display: flex; gap: 1px; width: 106px; height: 21px; margin: 0 4px 0 164px; background: #edeceb; border: 1px solid #989693; border-radius: 3px; overflow: hidden; }
.pager svg { width: 26px; height: 20px; }
.pager span { flex: 1; background: #a8a6a3; }

.window { position: absolute; background: #efeeec; border: 1px solid #73716f; border-radius: 7px 7px 0 0; box-shadow: 2px 4px 8px rgba(0, 0, 0, .55); }
.title { display: flex; align-items: center; gap: 4px; height: 23px; padding: 0 6px; border-bottom: 1px solid #9b9997; border-radius: 6px 6px 0 0; background: linear-gradient(#f3f2f1, #d3d1cf); color: #686765; }
.title h2 { flex: 1; margin: 0; text-align: center; font: bold 14px "Noto Sans", sans-serif; white-space: nowrap; }
.title button { width: 18px; height: 18px; border: 1px solid #8c8a88; border-radius: 3px; background: linear-gradient(#fff, #eceae8); display: grid; place-items: center; }
.title button svg { width: 12px; height: 12px; fill: none; stroke: #666; stroke-width: 2; }
.scope { left: 1069px; top: 178px; width: 180px; padding-bottom: 4px; }
.dial { width: 170px; height: 170px; margin: 1px auto 0; }
.body { font: 12px "DejaVu Sans", sans-serif; background: #c0c0c0; margin: 0 3px 3px; }
.body input, .body textarea { border: 1px solid #777; border-radius: 3px; background: #fff; }
.bevel { border: 1px solid #6b6b6b; border-radius: 3px; background: linear-gradient(#d0d0d0, #b6b6b6); box-shadow: inset 1px 1px 0 #dedede; }
.bevel:disabled { color: #858585; border-color: #9c9c9c; background: #bababa; box-shadow: none; }

.psk { left: 32px; top: 558px; width: 364px; }
.psk .body { padding: 4px 4px 6px; }
.find { display: flex; align-items: center; gap: 8px; height: 20px; margin-bottom: 2px; }
.find input { width: 200px; height: 20px; }
.list { background: #fff; border: 1px solid #777; border-radius: 3px; padding: 1px; }
.psk table { width: 100%; border-collapse: collapse; font: 13px/17px "DejaVu Sans Mono", monospace; table-layout: fixed; }
.psk tr { height: 17px; }
.psk th { width: 88px; padding: 0 5px 0 0; text-align: right; font-weight: normal; }
.psk td { padding: 0 0 0 3px; white-space: pre; overflow: hidden; }
.psk tr:nth-child(even) td { background: #e4e4e4; }
.actions { display: flex; gap: 2px; height: 20px; margin-top: 2px; }
.actions .bevel { display: flex; align-items: center; justify-content: center; gap: 3px; }
.actions output { width: 34px; font-size: 11px; }
.actions .slider { flex: 1; }
.actions button { width: 65px; }
.slider input { appearance: none; width: 100%; height: 3px; background: #000; border: 0; border-radius: 0; }
.slider input::-webkit-slider-thumb { appearance: none; width: 12px; height: 16px; border: 1px solid #555; border-radius: 3px; background: #c6c6c6; }

.fldigi { left: 599px; top: 456px; width: 656px; border-color: #44618e; border-bottom-color: #555; }
.fldigi .title { background: linear-gradient(#9bbce8, #7397c9); color: #fff; border-bottom-color: #4c6da0; text-shadow: 0 1px 1px #2e4a78; height: 22px; }
.fldigi .title button { border-color: #4a6a9c; background: linear-gradient(#a4c2ea, #7c9fd0); }
.fldigi .title button svg { stroke: #fff; }
.fldigi .body { padding-bottom: 3px; }
.menurow { display: flex; gap: 2px; height: 22px; }
.menurow nav { flex: 1; display: flex; align-items: center; padding-left: 7px; gap: 16px; }
.menurow .gap { margin-right: 36px; }
.toggle { width: 48px; display: flex; align-items: center; justify-content: center; gap: 3px; }
.toggle i { width: 6px; height: 10px; border: 1px solid; border-color: #777 #eee #eee #777; }
.rigrow { display: flex; gap: 2px; height: 75px; }
.rig { width: 162px; display: flex; flex-direction: column; }
.xcvr { height: 25px; line-height: 25px; text-align: center; }
.digits { height: 23px; background: #000; border: 1px solid #777; border-radius: 3px; color: #00c400; font: 22px/22px "DejaVu Sans Mono", monospace; display: flex; justify-content: flex-end; gap: 5px; padding-right: 2px; overflow: hidden; }
.digits span:first-child, .digits span:nth-child(2) { margin-right: -7px; }
.modes { display: flex; height: 23px; margin-top: 3px; }
.modes select { appearance: none; width: 52px; background: #fff; border: 1px solid #777; border-radius: 3px; padding-left: 2px; color: #000; }
.modes select:disabled { background: #d2d2d2; border-color: #bbb; opacity: 1; }
.modes .drop { width: 19px; display: grid; place-items: center; }
.drop svg:not(.i16) { width: 11px; height: 7px; }
.side { display: flex; flex-direction: column; gap: 1px; width: 23px; }
.side button { flex: 1; display: grid; place-items: center; }
.log2 { width: 437px; flex: none; }
.r1 { display: flex; height: 50px; padding-top: 12px; }
.r1 label { display: flex; flex-direction: column; flex: none; white-space: nowrap; line-height: 15px; padding-right: 1px; }
.r1 input, .r2 input { height: 23px; padding-left: 3px; }
.r1 input { width: 100%; }
.r2 { display: flex; justify-content: space-between; margin-top: 1px; padding-right: 1px; }
.r2 label { display: flex; align-items: center; }
.notes { flex: 1; display: flex; flex-direction: column; padding-top: 12px; margin-left: -1px; line-height: 15px; overflow: hidden; }
.notes textarea { flex: 1; width: 40px; resize: none; }
.rx, .tx { display: flex; position: relative; border: 1px solid #777; border-radius: 2px; }
.rx { height: 200px; margin-top: 1px; }
.rx textarea, .tx textarea { flex: 1; resize: none; border: 0; outline: 0; overflow: hidden; border-radius: 0; font: 17px/16px "DejaVu Sans Mono", monospace; padding: 3px 3px 0; white-space: pre; }
.rx textarea { background: #fff0be; }
.tx { height: 29px; }
.tx textarea { background: #c8ebff; }
.ibeam { position: absolute; left: 2px; top: 10px; width: 5px; height: 15px; }
.sbar { width: 16px; background: #969696; display: flex; flex-direction: column; }
.sbar button { height: 16px; display: grid; place-items: center; }
.sbar svg { width: 9px; height: 9px; }
.sbar .room { flex: 1; } .sbar .knob { height: 52px; display: grid; place-items: center; }
.stub { height: 13px; }
.macros { display: flex; height: 21px; margin-top: 1px; background: #000; border: solid #999; border-width: 1px 0; padding-left: 1px; gap: 5px; }
.group { display: flex; gap: 2px; flex: 1; }
.group button { flex: 1; width: 0; display: flex; align-items: center; justify-content: center; gap: 3px; color: #fff; border: 1px solid; border-color: #bbb8 #0006 #0006 #bbb8; border-radius: 2px; white-space: nowrap; }
.group svg { width: 14px; height: 12px; fill: #fff; }
.teal button { background: #4b8c89; } .wine button { background: #8e5050; } .indigo button { background: #4c4c8b; }
.macros .page1 { width: 31px; margin-left: 2px; }
.wfrow { display: flex; gap: 1px; height: 125px; }
.wfcol { width: 618px; display: flex; flex-direction: column; justify-content: space-between; padding-bottom: 1px; }
.audio { border: 1px solid #777; overflow: hidden; }
.audio text { font: 12px "DejaVu Sans", sans-serif; fill: #ddd; text-anchor: middle; }
.fall { position: relative; }
.fall svg { position: absolute; inset: 0; width: 617px; height: 71px; }
.ctl { display: flex; height: 20px; gap: 2px; }
.ctl button { display: flex; align-items: center; justify-content: center; }
.ctl input { text-align: center; }
.ctl svg { height: 9px; width: 8px; }
.ctl .wf { width: 34px; } .ctl .n { width: 11px; } .ctl .n svg { width: 6px; } .ctl .v { width: 32px; margin: 0 -1px; } .ctl .x1 { width: 27px; }
.ctl .m { width: 19px; } .ctl .m svg { width: 12px; height: 13px; } .ctl .norm { width: 50px; }
.ctl .s { width: 13px; } .ctl .s svg { width: 10px; } .ctl .f { width: 44px; } .ctl .q { width: 36px; } .ctl .st { width: 45px; }
.ctl .tr { width: 44px; margin-left: auto; margin-right: 1px; }
.led i { width: 6px; height: 10px; border: 1px solid; border-color: #777 #eee #eee #777; margin-right: 4px; flex: none; }
.lit i { background: #0f0; border-color: #0a0; }
.level { width: 15px; border: 1px solid #555; border-radius: 3px; background: linear-gradient(#fff 7px, #008c00 7px); }
.squelch { flex: 1; background: #555; border: 1px solid #333; border-radius: 3px; display: flex; align-items: flex-end; justify-content: center; padding-bottom: 8px; }
.squelch span { width: 9px; height: 4px; border-radius: 2px; background: #ccc; }
.status { display: flex; align-items: center; height: 21px; margin-top: 3px; gap: 2px; }
.status output { height: 21px; line-height: 19px; background: #fff; border: 1px solid #777; border-radius: 3px; padding-left: 3px; }
.status .a { width: 108px; } .status .b { width: 98px; } .status .c { flex: 1; }
.status svg { width: 13px; height: 18px; }
.status button { width: 50px; height: 21px; display: flex; align-items: center; justify-content: center; }
</style>
